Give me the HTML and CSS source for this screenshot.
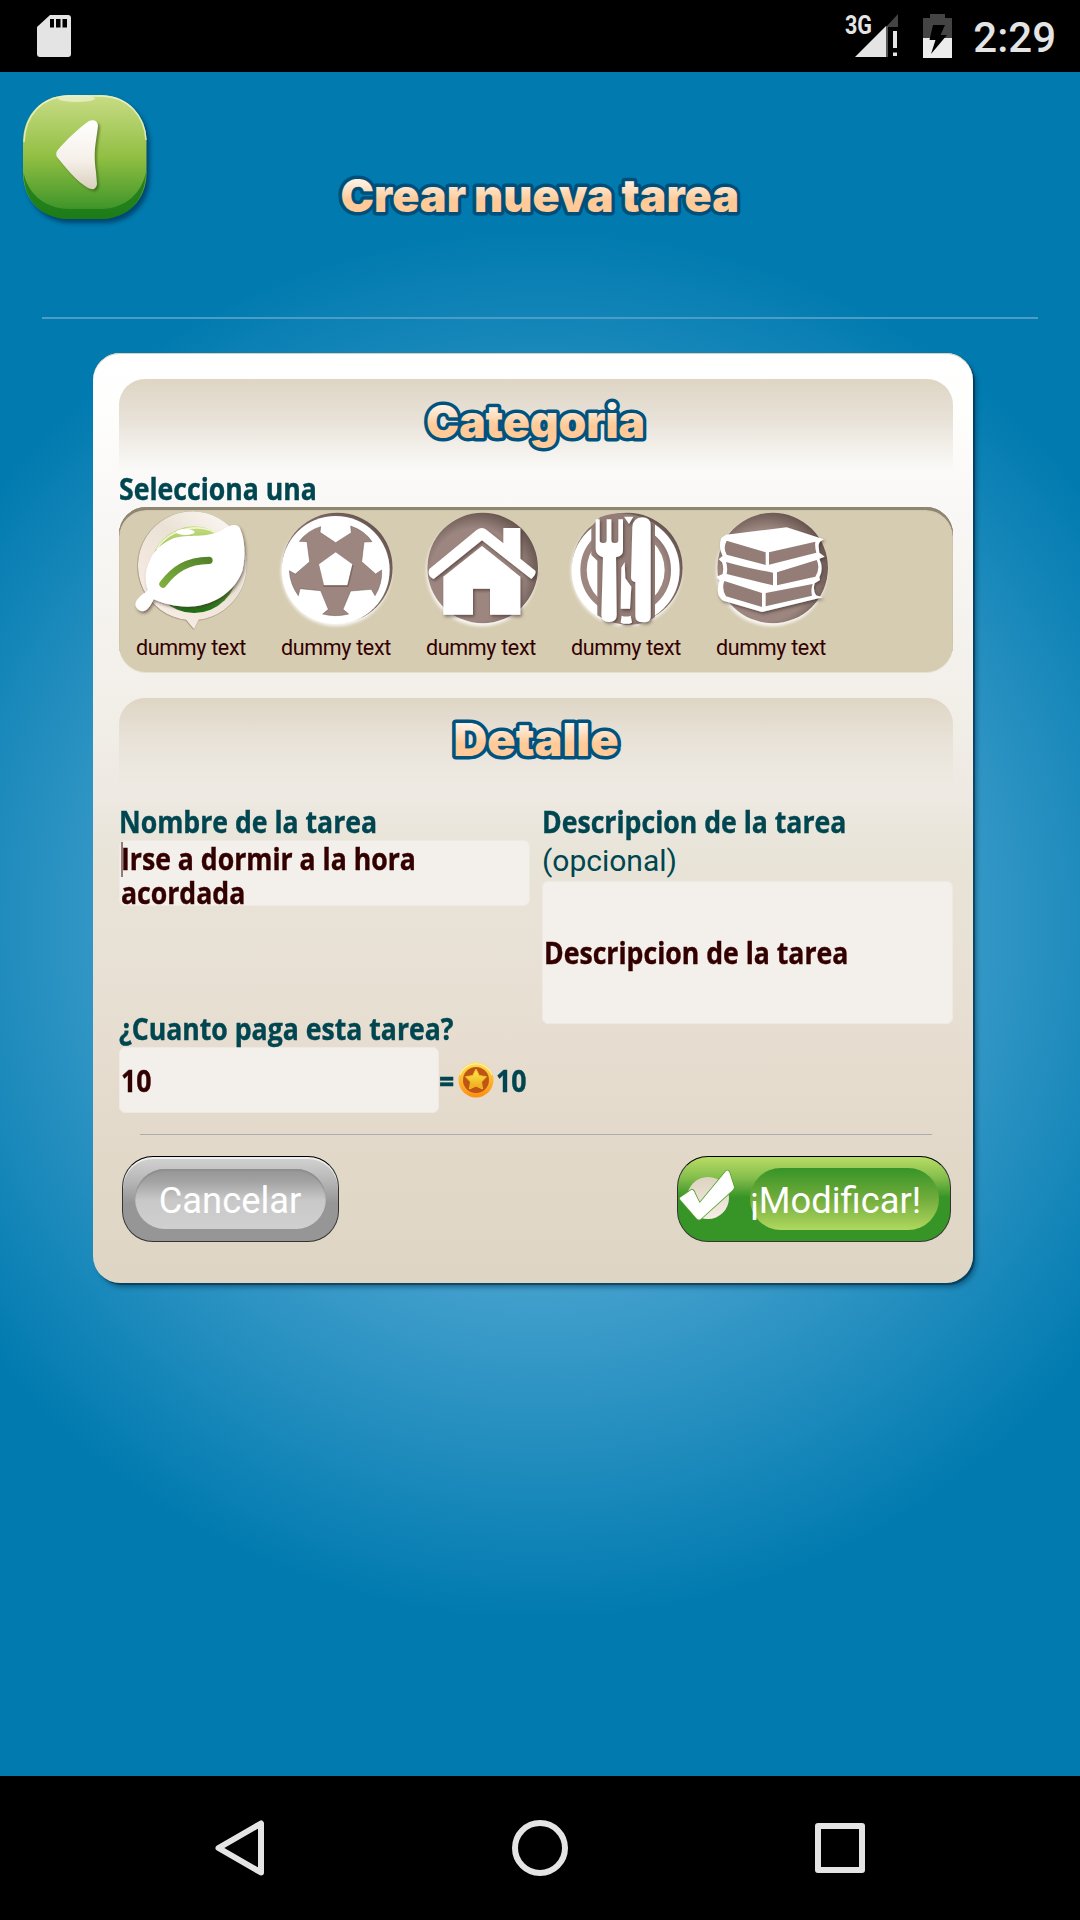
FILE: index.html
```
<!DOCTYPE html>
<html lang="es">
<head>
<meta charset="utf-8">
<title>Crear nueva tarea</title>
<link rel="stylesheet" href="styles.css">
</head>
<body>
<svg class="defs" width="0" height="0" aria-hidden="true">
  <defs>
    <linearGradient id="peach" x1="0" y1="0" x2="0" y2="1"><stop offset=".25" stop-color="#fff0e0"/><stop offset=".58" stop-color="#ffca97"/></linearGradient>
    <linearGradient id="green" x1="0" y1="0" x2="0" y2="1"><stop offset="0" stop-color="#c9dc85"/><stop offset=".5" stop-color="#91bf43"/><stop offset=".9" stop-color="#43972b"/><stop offset="1" stop-color="#1d7a17"/></linearGradient>
    <linearGradient id="leafgreen" x1="0" y1="0" x2="0" y2="1"><stop offset="0" stop-color="#c5db80"/><stop offset=".5" stop-color="#7fb23c"/><stop offset="1" stop-color="#1c6f14"/></linearGradient>
    <linearGradient id="cream" x1="0" y1="0" x2="0" y2="1"><stop offset="0" stop-color="#fff"/><stop offset=".6" stop-color="#f5efe8"/><stop offset="1" stop-color="#d8cfbc"/></linearGradient>
    <linearGradient id="bubble" x1="1" y1="0" x2=".2" y2="1"><stop offset="0" stop-color="#fffdfb"/><stop offset=".45" stop-color="#ebe2d6"/><stop offset="1" stop-color="#faeee6"/></linearGradient>
    <linearGradient id="disc" x1="0" y1="0" x2="0" y2="1"><stop offset="0" stop-color="#dcd3c0"/><stop offset="1" stop-color="#f6eee6"/></linearGradient>
    <linearGradient id="vein" x1="0" y1="1" x2="1" y2="0"><stop offset="0" stop-color="#7fae3e"/><stop offset="1" stop-color="#54842a"/></linearGradient>
    <radialGradient id="mauve" cx=".44" cy=".56" r=".58"><stop offset=".72" stop-color="#9d8680"/><stop offset="1" stop-color="#67554f"/></radialGradient>
    <linearGradient id="gold" x1="0" y1="0" x2="0" y2="1"><stop offset="0" stop-color="#fde04e"/><stop offset="1" stop-color="#ff8d10"/></linearGradient>
    <linearGradient id="star" x1="0" y1="0" x2="0" y2="1"><stop offset="0" stop-color="#fff04a"/><stop offset="1" stop-color="#eda41c"/></linearGradient>
    <filter id="soft" x="-20%" y="-20%" width="140%" height="140%"><feDropShadow dx="4" dy="6" stdDeviation="4" flood-color="#3b2c26" flood-opacity=".6"/></filter>
    <filter id="glow" x="-20%" y="-20%" width="140%" height="140%"><feDropShadow dx="-3" dy="9" stdDeviation="4" flood-color="#fff" flood-opacity=".8"/></filter>
  </defs>
</svg>

<header class="statusbar">
  <svg class="sd" width="34" height="42" viewBox="0 0 34 42"><path fill="#e4e4e4" d="M13 0H31a3 3 0 0 1 3 3V39a3 3 0 0 1-3 3H3a3 3 0 0 1-3-3V12Z"/><path d="M13 4h4v8.500h-4zM19 4h4.500v8.500H19zM25.500 4H30v8.500h-4.500z"/></svg>
  <div class="status-right">
    <svg width="55" height="54" viewBox="844 4 55 54">
      <path fill="#444" d="M886 27 898 14V27Z"/><path fill="#e4e4e4" d="M855 57 886 26V57Z"/><path fill="#555" d="M886 26h2v31h-2z"/><path fill="#e4e4e4" d="M893 31h4v17h-4zM893 52.500h4V56h-4z"/>
      <text class="net" x="845" y="33.500" textLength="27" lengthAdjust="spacingAndGlyphs">3G</text>
    </svg>
    <svg class="battery" width="29" height="44" viewBox="0 0 29 44"><path fill="#444" d="M7 0h15v4h7v20H0V4h7z"/><path fill="#ececec" d="M0 24h29v20H0z"/><path d="M10 11H22L17.500 21H24L8 40 12.500 26H6.500Z"/></svg>
    <span class="clock">2:29</span>
  </div>
</header>

<main class="screen">
  <div class="top">
    <svg class="back" width="140" height="140" viewBox="15 87 140 140">
      <path fill="url(#green)" d="M68 95H102C129 96 146 117 146.500 140V174C146 201 127 218 102 219H68C41 218 24 201 23 174V140C24 114 42 96 68 95Z"/>
      <path fill="#1b7b17" opacity=".85" d="M23.500 172C27 192 43 208 68 209H102C127 208 142 192 146 172C145 202 127 218 102 219H68C41 218 24 201 23.500 172Z"/>
      <path fill="none" stroke="#f0f5cf" stroke-width="1.500" opacity=".8" d="M24 142C25 115 42 96.500 68 96H102C128 96.500 145 116 146 140"/>
      <ellipse cx="76.500" cy="98.500" rx="18.500" ry="3.500" fill="#eaf0cc" opacity=".8"/>
      <path class="arrow" fill="url(#cream)" d="M57 151 C66 140 79 128 89 121C94 119 98 121 98 126C96 143 93 152 96 172L97 184C96 190 92 190 88 188C76 181 66 168 57 157C56 155 56 153 57 151Z"/>
    </svg>
    <svg class="page-title" width="420" height="90" viewBox="330 155 420 90"><text class="display on-blue" x="340.500" y="212" textLength="398.500" lengthAdjust="spacingAndGlyphs">Crear nueva tarea</text></svg>
  </div>
  <div class="rule"></div>

  <section class="card">
    <div class="panel-head"><svg width="240" height="76" viewBox="417 385 240 76"><text class="display" x="427" y="437.500" textLength="219" lengthAdjust="spacingAndGlyphs">Categoria</text></svg></div>
    <div class="label">Selecciona una</div>
    <div class="strip">
      <div class="cat">
        <svg viewBox="27 21 435 375">
          <g class="bub"><path fill="url(#bubble)" d="M228 359A163 163 0 1 1 266 359L252 388Z"/></g>
          <circle cx="252" cy="209" r="130" fill="url(#leafgreen)"/>
          <path fill="none" stroke="#eef5cf" stroke-width="5" d="M140 148C180 82 280 64 330 108"/><ellipse cx="226" cy="96" rx="28" ry="9" fill="#fff"/>
          <path filter="url(#soft)" fill="#fff" d="M341 87C358 75 384 67 391 88C405 120 407 167 398 209C381 260 335 306 256 319C208 324 166 313 131 298C120 321 106 343 86 330C72 318 74 306 86 294C96 281 112 276 113 270C103 239 106 209 119 183C133 148 160 128 190 115C235 100 291 118 341 87Z"/>
          <path fill="none" stroke="url(#vein)" stroke-width="22" stroke-linecap="round" d="M159 252C193 207 231 182 297 181"/>
        </svg>
        <span>dummy text</span>
      </div>
      <div class="cat">
        <svg viewBox="462 21 435 375">
          <circle cx="682" cy="204" r="166" fill="url(#mauve)" filter="url(#glow)"/>
          <circle cx="677" cy="210" r="162" fill="#fff"/>
          <path fill="#9d8680" stroke="#6f5c56" stroke-width="1.500" d="M632 80 630 97 677 128 724 98 722 78Q764 92 786 125L762 126 755 185 797 222 815 210Q817 252 795 287L784 268 722 273 699 328 716 342Q677 352 638 342L655 328 632 272 570 266 565 287Q540 252 538 212L556 222 599 185 591 125 568 124Q592 92 632 80Z"/>
          <path fill="#fff" d="M677 157 727 193 712 255H642L627 193Z"/>
          <path fill="none" stroke="#65534e" stroke-width="4" opacity=".6" d="M640 259H714L729 195"/>
        </svg>
        <span>dummy text</span>
      </div>
      <div class="cat">
        <svg viewBox="27 21 435 375">
          <circle cx="248" cy="204" r="166" fill="url(#mauve)" filter="url(#glow)"/>
          <g filter="url(#soft)"><path fill="#fff" d="M88 207 230 90Q246 78 260 90L310 130V84H361V176L406 212Q410 222 394 237L246 121 101 237Q80 227 88 207Z"/><path fill="#fff" d="M246 138 361 230V344H270V266H219V344H130V230Z"/></g>
        </svg>
        <span>dummy text</span>
      </div>
      <div class="cat">
        <svg viewBox="462 21 435 375">
          <circle cx="682" cy="204" r="166" fill="url(#mauve)" filter="url(#glow)"/>
          <circle cx="677" cy="210" r="149" fill="none" stroke="#fff" stroke-width="26"/>
          <circle cx="677" cy="210" r="117" fill="#fff"/>
          <path fill="#947d77" d="M574 80 600 52Q682 20 765 72V352Q724 378 677 374 625 370 592 346V182L574 165Z"/>
          <g filter="url(#soft)" fill="#fff">
            <path d="M587 58H599V120Q599 129 607 129H612Q620 129 620 120V58H634V120Q634 129 642 129H647Q655 129 655 120V58H669V150Q669 168 648 172L650 345Q650 366 628 366 604 366 604 345L609 172Q588 166 587 148Z"/>
            <path d="M693 232 697 80Q700 54 726 52 752 52 752 76V350Q752 367 730 367 706 367 706 348V246Q693 244 693 232Z"/>
            <path d="M672 50H700L687 72ZM664 203 674 186 676 235 694 260 690 326H662ZM665 347Q678 352 692 347L696 368Q678 375 662 368Z"/>
          </g>
        </svg>
        <span>dummy text</span>
      </div>
      <div class="cat">
        <svg viewBox="27 21 435 375">
          <circle cx="248" cy="204" r="166" fill="url(#mauve)" filter="url(#glow)"/>
          <g filter="url(#soft)">
            <path fill="#fff" d="M108 104 290 82 401 118Q384 126 386 140L388 158 404 170 388 176Q402 205 388 232L390 240 374 250Q368 270 378 286L398 292 216 336 100 302Q80 290 84 262L88 242 80 230 98 222Q102 200 96 187L86 178 98 168Q84 142 94 114Z"/>
          </g>
          <path fill="#947d77" d="M110 122 227 157V195L110 164Q98 144 110 122ZM237 157 376 125Q374 142 379 158L237 194ZM108 186Q170 204 249 218V256L110 222Q114 203 108 186ZM261 217 380 180Q392 204 376 230L261 256ZM103 243 216 279V321L108 289Q94 266 103 243ZM227 279 368 252Q362 270 366 287L227 319Z"/>
        </svg>
        <span>dummy text</span>
      </div>
    </div>

    <div class="panel-head second"><svg width="190" height="76" viewBox="443 704 190 76"><text class="display" x="455.500" y="755.500" textLength="165" lengthAdjust="spacingAndGlyphs">Detalle</text></svg></div>

    <div class="form">
      <div class="col">
        <div class="label">Nombre de la tarea</div>
        <div class="field name"><i class="caret"></i><span>Irse a dormir a la hora<br>acordada</span></div>
        <div class="label">¿Cuanto paga esta tarea?</div>
        <div class="pay">
          <div class="field amount"><span>10</span></div>
          <span class="eq">=</span>
          <svg width="36" height="36" viewBox="0 0 36 36"><circle cx="18" cy="18" r="17.500" fill="url(#gold)"/><path fill="none" stroke="#fff3b0" stroke-width="1.200" d="M2 13A17 17 0 0 1 34 13"/><circle cx="18" cy="18" r="13" fill="#bd5514"/><path fill="url(#star)" stroke="#f7b92a" stroke-linejoin="round" d="M18 7 21.300 13.500 28.500 14.700 23.500 20 24.500 27 18 24 11.500 27 12.500 20 7.500 14.700 14.700 13.500Z"/></svg>
          <span class="total">10</span>
        </div>
      </div>
      <div class="col">
        <div class="label">Descripcion de la tarea</div>
        <div class="optional">(opcional)</div>
        <div class="field description"><span>Descripcion de la tarea</span></div>
      </div>
    </div>

    <div class="divider"></div>
    <div class="actions">
      <div class="btn cancel"><div class="inner">Cancelar</div></div>
      <div class="btn accept">
        <svg width="60" height="60" viewBox="115 177 180 180"><circle cx="205" cy="267" r="63" fill="url(#disc)"/><path fill="#fff" stroke="#5aa334" stroke-width="5" paint-order="stroke" stroke-linejoin="round" d="M121 266 156 242Q163 243 166 254L180 282 257 189Q264 180 269 190L283 234Q283 240 278 244L184 329Q177 335 170 327L123 273Q119 269 121 266Z"/></svg>
        <div class="inner">¡Modificar!</div>
      </div>
    </div>
  </section>
</main>

<nav class="navbar">
  <svg width="650" height="56" viewBox="215 1820 650 56" fill="none" stroke="#e4e4e4" stroke-width="6" stroke-linejoin="round"><path d="M218.500 1848 261 1823.500V1872.500Z"/><circle cx="540" cy="1848" r="25"/><rect x="818" y="1826" width="44" height="44"/></svg>
</nav>
</body>
</html>
```
FILE: styles.css
```
* { box-sizing: border-box; }

body {
  margin: 0;
  width: 1080px;
  height: 1920px;
  overflow: hidden;
  display: flex;
  flex-direction: column;
  background: #000;
  font-family: "Open Sans", sans-serif;
}

svg { display: block; flex: none; overflow: visible; }
.defs { position: absolute; }

/* system bars */
.statusbar {
  height: 72px;
  flex: none;
  display: flex;
  justify-content: space-between;
  align-items: flex-start;
  padding: 4px 24px 0 37px;
}
.sd { margin-top: 11px; }
.status-right { display: flex; gap: 24px; }
.battery { margin-top: 10px; }
.clock {
  font: 500 42px/46px Roboto, sans-serif;
  color: #e4e4e4;
  margin: 11px 0 0 -3px;
}
.net { font: 700 25px Roboto, sans-serif; fill: #e4e4e4; }

.navbar {
  height: 144px;
  flex: none;
  display: flex;
  justify-content: center;
  align-items: center;
}

/* content */
.screen {
  height: 1704px;
  flex: none;
  background: radial-gradient(circle 700px at 540px 852px, #8ac8ec, #007aaf);
}
.top {
  height: 245px;
  display: flex;
  padding: 15px 0 0 15px;
}
.back { filter: drop-shadow(3px 4px 2px rgba(0, 30, 60, .55)); }
.arrow { filter: drop-shadow(2px 2px 1px rgba(40, 70, 10, .5)); }
.page-title { margin: 68px 0 0 175px; }
.rule { height: 2px; margin: 0 42px; background: #4c9dc6; }

.display {
  font: 900 45px Inter, "Open Sans", sans-serif;
  word-spacing: -1px;
  fill: url(#peach);
  stroke: #00527f;
  stroke-width: 7px;
  stroke-linejoin: round;
  paint-order: stroke;
}
.on-blue { stroke: #004f7a; }

.card {
  width: 880px;
  height: 930px;
  margin: 34px 0 0 93px;
  padding: 26px 20px 0 26px;
  border-radius: 27px;
  background: linear-gradient(#fff 0, #fefefd 6%, #f9f7f5 18%, #f2efe9 38%, #eee9e2 47%, #e9e4d8 54%, #e8dfd3 70%, #e1d8c8 88%, #ded5c4);
  box-shadow: inset 0 1px 0 #d9cfbd, 2px 2px 1px rgba(0, 40, 65, .6), 4px 5px 4px rgba(0, 50, 80, .4);
}

.panel-head {
  height: 92px;
  display: flex;
  justify-content: center;
  padding: 6px 0 0;
  border-radius: 26px 26px 0 0;
  background: linear-gradient(#ded5c4, #e8e2d8 45%, rgba(240, 235, 229, 0));
}
.panel-head.second { margin-top: 26px; }

.label, .field, .eq, .total {
  font-size: 29.7px;
  font-weight: 700;
  line-height: 34px;
  white-space: nowrap;
  color: #004650;
  -webkit-text-stroke: .4px currentColor;
}
.label { line-height: 36px; height: 36px; }

/* the labels' face is narrower than the regular width */
.label, .field span, .eq, .total {
  transform: scaleX(.897);
  transform-origin: 0 50%;
}
.field span { display: block; }

.strip {
  height: 165px;
  display: flex;
  border-radius: 27px;
  background: #d6ccb2;
  box-shadow: inset 0 3px 0 #8f8672, inset 0 3px 1px #8f8672, 0 1px 0 #e6e0cf;
}
.cat { width: 145px; text-align: center; }
.cat svg { width: 145px; height: 125px; }
.cat span {
  display: block;
  padding: 1px 1px 0 0;
  font: 400 21.500px/30px Roboto, sans-serif;
  letter-spacing: -.35px;
  color: #300;
}
.bub { filter: drop-shadow(-1px 1px 2px rgba(90, 75, 50, .8)); }

.form {
  display: grid;
  grid-template-columns: 411px 411px;
  gap: 12px;
  margin-top: 14px;
}
.form .col > .label:first-child { line-height: 35px; }
.field {
  border-radius: 7px;
  background: #f3f0eb;
  box-shadow: inset 0 0 0 1px #efe9e3;
  color: #300;
  padding-left: 2px;
}
.name {
  position: relative;
  height: 66px;
  padding-top: 2px;
  margin-bottom: 105px;
}
.caret {
  position: absolute;
  left: 2px;
  top: 2px;
  width: 2px;
  height: 35px;
  background: #937a7a;
}
.optional {
  height: 41px;
  padding-top: 1px;
  font: 400 30px/40px Roboto, sans-serif;
  color: #004650;
}
.description { height: 143px; display: flex; align-items: center; }
.pay { display: flex; align-items: center; height: 66px; }
.amount { width: 321px; height: 66px; padding-top: 17px; }
.eq { width: 19px; padding-top: 2px; }
.total { margin-left: 2px; padding-top: 2px; }

.divider { height: 1px; margin: 21px 21px 0; background: #adadb1; }
.actions {
  display: flex;
  justify-content: space-between;
  margin-top: 21px;
  padding: 0 2px 0 3px;
}
.btn {
  height: 86px;
  display: flex;
  border: 1px solid #333;
  border-top-color: #000;
  border-radius: 31px;
  font: 400 36.300px/60px Roboto, sans-serif;
  color: #fff;
}
.inner { height: 60px; border-radius: 30px; text-align: center; white-space: nowrap; }
.cancel {
  width: 217px;
  padding: 12px 12px 0;
  background: linear-gradient(#d3d3d3, #b5b5b5 30%, #969696 55%);
  box-shadow: inset 0 2px 0 #eee;
}
.cancel .inner {
  width: 191px;
  padding-right: 1px;
  line-height: 63px;
  background: linear-gradient(#959595, #a2a2a2 20%, #c8c8c8 52%, #d0d0d0);
  box-shadow: inset 0 2px 1px #8f8f8f;
}
.accept {
  width: 274px;
  padding: 11px 11px 0 0;
  background: linear-gradient(#b8dd65, #84bd4c 25%, #379427 48%);
}
.accept .inner {
  width: 189px;
  height: 62px;
  margin-left: 12px;
  padding-right: 25px;
  border-radius: 31px;
  background: linear-gradient(#379427, #72ac3c 50%, #b0d85e);
  line-height: 65px;
}
```
